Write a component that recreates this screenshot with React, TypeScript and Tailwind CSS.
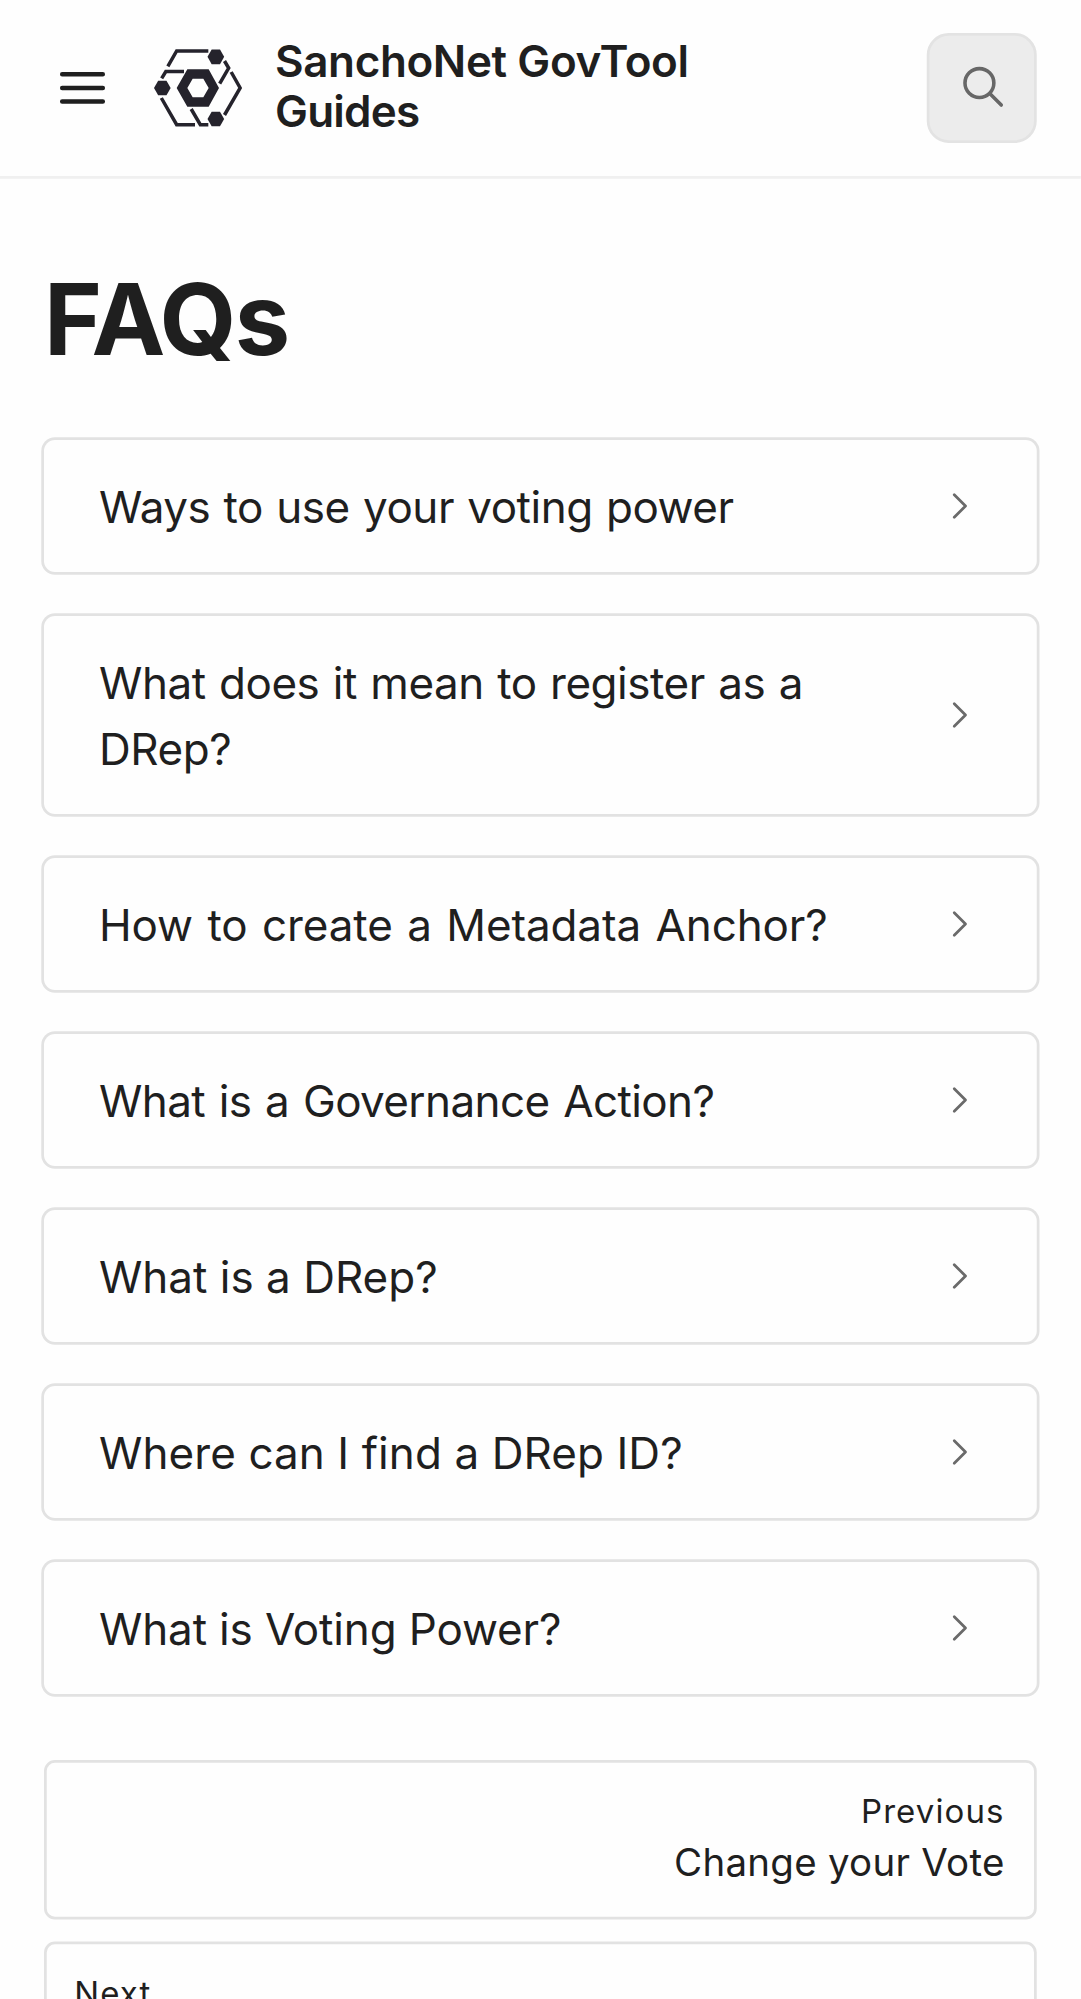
import React from "react";

const INK = "#25232c";

const faqs = [
  { title: "Ways to use your voting power", spacing: "tracking-[-0.17px] [word-spacing:0.5px]" },
  { title: "What does it mean to register as a DRep?", spacing: "tracking-[-0.17px] [word-spacing:0.55px]" },
  { title: "How to create a Metadata Anchor?", spacing: "tracking-[-0.04px] [word-spacing:0.8px]" },
  { title: "What is a Governance Action?", spacing: "tracking-[-0.22px] [word-spacing:0.7px]" },
  { title: "What is a DRep?", spacing: "tracking-normal" },
  { title: "Where can I find a DRep ID?", spacing: "tracking-[0.03px]" },
  { title: "What is Voting Power?", spacing: "tracking-[-0.055px]" },
];

function MenuIcon() {
  return (
    <svg className="size-5" viewBox="0 0 20 20" fill="none" stroke="#1f1f1f" strokeWidth="1.6" strokeLinecap="round">
      <path d="M2.6 5h14.8M2.6 10h14.8M2.6 14.900h14.8" />
    </svg>
  );
}

function SearchIcon() {
  return (
    <svg className="size-5" viewBox="0 0 20 20" fill="none" stroke="#676767" strokeWidth="1.3" strokeLinecap="round">
      <circle cx="9.15" cy="8.2" r="5.25" />
      <path d="M13 12.05 17.1 16.2" />
    </svg>
  );
}

function ChevronIcon() {
  return (
    <svg
      className="size-3 shrink-0"
      viewBox="0 0 12 12"
      fill="none"
      stroke="#6a6a6a"
      strokeWidth="1"
      strokeLinecap="round"
      strokeLinejoin="round"
    >
      <path d="M4 1.9 8.1 6 4 10.1" />
    </svg>
  );
}

const NODE = "M-25 0 -12.5 -22H12.5L25 0 12.5 22H-12.5Z";

function Logo() {
  return (
    <svg className="size-8 shrink-0" viewBox="42 42 264 264" fill={INK}>
      <g fill="none" stroke={INK} strokeWidth="10.5">
        <path d="M205 63H110L83.500 109" />
        <path d="M132 124.500H77.500L65 145" />
        <path d="M64 204 110 284H165" />
        <path d="M153.500 237 181 284H205" />
        <path d="M253.500 93 266 114 239 161" />
        <path d="M273.500 126 300.500 174 253.500 255" />
      </g>
      <path d={NODE} transform="translate(67 174)" />
      <path d={NODE} transform="translate(227.500 80.500)" />
      <path d={NODE} transform="translate(227.500 267)" />
      <path fillRule="evenodd" d="M110 174 142 118H206L237 174 206 230H142ZM142 174 158 202H190L206 174 190 146H158Z" />
    </svg>
  );
}

function Header() {
  return (
    <header className="flex h-[65px] items-center border-b border-[#f0f0f0]">
      <div className="flex h-16 w-full items-center px-4">
        <button className="ml-1 flex size-5 items-center justify-center" aria-label="Open menu">
          <MenuIcon />
        </button>
        <a className="ml-4 flex items-center gap-3" href="#">
          <Logo />
          <span className="pb-0.5 text-base leading-[18px] font-semibold tracking-[-0.14px]">
            SanchoNet GovTool
            <br />
            <span className="tracking-[-0.28px]">Guides</span>
          </span>
        </a>
        <button
          className="ml-auto flex size-10 items-center justify-center rounded-lg border border-[#e3e3e3] bg-[#ececec]"
          aria-label="Search"
        >
          <SearchIcon />
        </button>
      </div>
    </header>
  );
}

function FaqCard({ title, spacing }: { title: string; spacing: string }) {
  return (
    <a className="flex items-center gap-4 rounded-sm py-3 pr-[22px] pl-5 text-base ring-1 ring-[#e2e2e2]" href="#">
      <span className={`flex-1 ${spacing}`}>{title}</span>
      <ChevronIcon />
    </a>
  );
}

export default function App() {
  return (
    <div className="h-screen w-screen overflow-hidden bg-[#fefefe]">
      <div className="h-[727px] w-[393px] origin-top-left scale-[2.75] font-['Inter',sans-serif] text-[#1f1f1f]">
        <Header />
        <main className="px-4 pt-[31px]">
          <h1 className="text-4xl leading-10 font-bold tracking-[-0.6px]">FAQs</h1>
          <div className="mt-6 flex flex-col gap-4">
            {faqs.map((faq) => (
              <FaqCard key={faq.title} title={faq.title} spacing={faq.spacing} />
            ))}
          </div>
          <nav className="mt-6 flex flex-col gap-2">
            <a
              className="flex flex-col items-end rounded-sm border border-[#e2e2e2] py-2.5 pr-[10.7px] pl-2.5"
              href="#"
            >
              <span className="text-xs tracking-[0.4px]">Previous</span>
              <span className="text-sm tracking-[0.09px]">Change your Vote</span>
            </a>
            <a className="flex flex-col items-start rounded-sm border border-[#e2e2e2] p-2.5" href="#">
              <span className="text-xs tracking-[0.4px]">Next</span>
            </a>
          </nav>
        </main>
      </div>
    </div>
  );
}
